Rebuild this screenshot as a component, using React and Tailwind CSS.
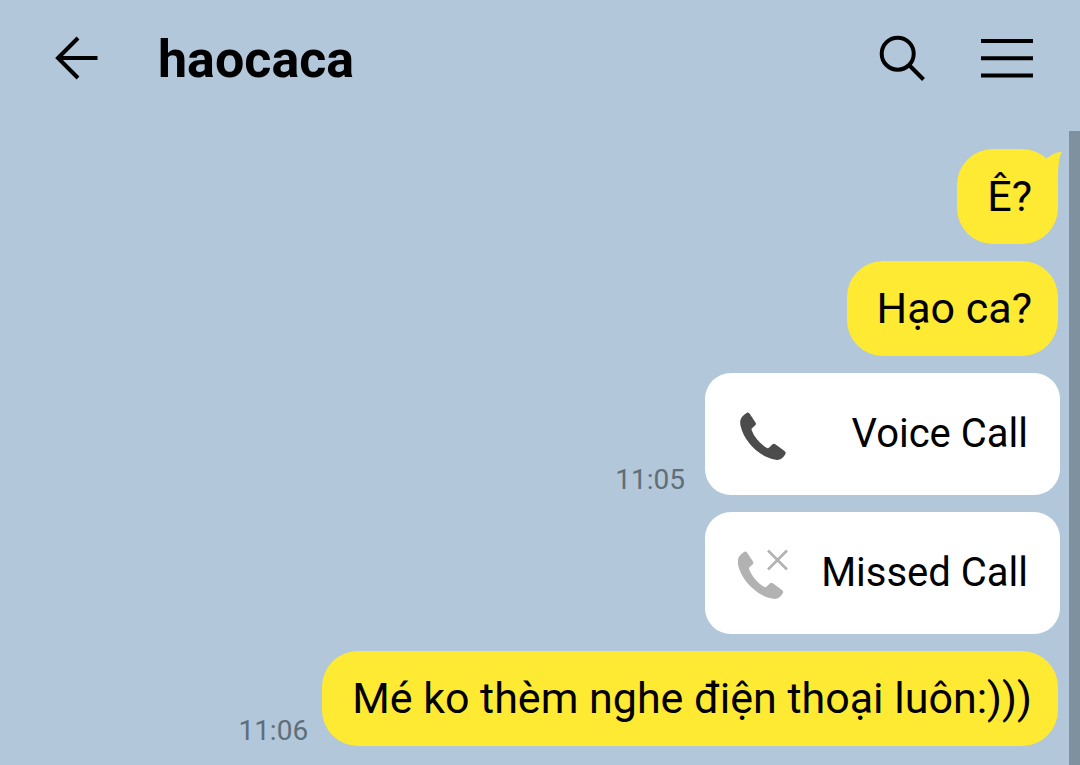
const messages = [
  { id: 1, type: 'text', text: 'Ê?', tail: true },
  { id: 2, type: 'text', text: 'Hạo ca?' },
  { id: 3, type: 'call', text: 'Voice Call', time: '11:05' },
  { id: 4, type: 'call', text: 'Missed Call', missed: true },
  { id: 5, type: 'text', text: 'Mé ko thèm nghe điện thoại luôn:)))', time: '11:06' },
];

const BackIcon = () => (
  <svg className="h-12 w-12" viewBox="0 0 48 48" fill="none" stroke="currentColor" strokeWidth="4">
    <path d="M45.500 24H6M26 4L6 24L26 44" />
  </svg>
);

const SearchIcon = () => (
  <svg className="h-12 w-12" viewBox="0 0 48 48" fill="none" stroke="currentColor" strokeWidth="4">
    <circle cx="19.700" cy="19.700" r="16" />
    <path d="M31 31L45.500 45.500" />
  </svg>
);

const MenuIcon = () => (
  <svg className="h-12 w-[52px]" viewBox="0 0 52 48" fill="none" stroke="currentColor" strokeWidth="4">
    <path d="M0 7H52M0 24.300H52M0 41.500H52" />
  </svg>
);

const PhoneIcon = ({ missed }) => (
  <svg
    className={`h-[52px] w-[52px] shrink-0 ${missed ? 'text-[#b2b2b2]' : 'text-[#4c4c4c]'}`}
    viewBox="0 0 52 52"
    fill="none"
  >
    <path
      transform={missed ? 'translate(-2.500 3)' : 'translate(0 3)'}
      fill="currentColor"
      d="M8.200 2.200Q10 0.800 11.500 2.500L17.500 11.500Q18.600 13.200 17 14.600L14 17.200Q13.200 18.200 13.800 19.500C16.500 26.500 22 32.800 28.500 36.800Q30 37.800 31.200 36.600L34.300 33.400Q35.700 32.200 37.300 33.300L46.500 40Q48.400 41.500 47.200 43.200C45 47.200 42 49.800 36.500 48.600C20 45 6 30 2.600 15C1.200 8.500 3.500 5.500 8.200 2.200Z"
    />
    {missed && <path stroke="currentColor" strokeWidth="2.600" d="M30 3.500L49 22.500M49 3.500L30 22.500" />}
  </svg>
);

const TextBubble = ({ text, tail }) => (
  <div className="relative mr-[11px] rounded-[36px] bg-[#ffea33] pt-[22px] pr-[26px] pb-[23px] pl-[30px] text-[43px] leading-[50px] text-black">
    {tail && (
      <svg className="absolute -top-px -right-1 h-10 w-8 text-[#ffea33]" viewBox="0 0 32 40">
        <path fill="currentColor" d="M13 12C19 10.500 22 4 32 4C29 9 28 16 28 34L12 20Z" />
      </svg>
    )}
    <p className="relative">{text}</p>
  </div>
);

const CallCard = ({ text, missed }) => (
  <div className="mr-[9px] flex h-[122px] w-[355px] items-center justify-between rounded-[26px] bg-white pr-8 pl-[33px] text-black">
    <PhoneIcon missed={missed} />
    <p className="text-[40px] leading-[50px]">{text}</p>
  </div>
);

const Message = ({ message }) => (
  <li className="flex items-end justify-end">
    {message.time && (
      <time
        className={`text-[28px] leading-[30px] text-[#5f6e78] ${message.type === 'call' ? 'mr-5' : 'mr-[14px]'}`}
      >
        {message.time}
      </time>
    )}
    {message.type === 'call' ? (
      <CallCard text={message.text} missed={message.missed} />
    ) : (
      <TextBubble text={message.text} tail={message.tail} />
    )}
  </li>
);

export default function App() {
  return (
    <div className="flex min-h-screen flex-col bg-[#b2c7da] font-['Roboto',sans-serif]">
      {/* Chat header */}
      <header className="flex h-[131px] items-center pr-[47px] pb-[15px] pl-[52px] text-black">
        <button type="button" aria-label="Back">
          <BackIcon />
        </button>
        <h1 className="ml-[58px] flex-1 pt-1 text-[52px] leading-[60px] font-bold">haocaca</h1>
        <button type="button" aria-label="Search">
          <SearchIcon />
        </button>
        <button type="button" aria-label="Menu" className="ml-[55px]">
          <MenuIcon />
        </button>
      </header>

      {/* Messages */}
      <main className="flex flex-1">
        <ul className="flex flex-1 flex-col gap-[17px] pt-[18px] pb-[19px]">
          {messages.map((message) => (
            <Message key={message.id} message={message} />
          ))}
        </ul>
        <div className="w-[11px] bg-[#7f919e]" />
      </main>
    </div>
  );
}
